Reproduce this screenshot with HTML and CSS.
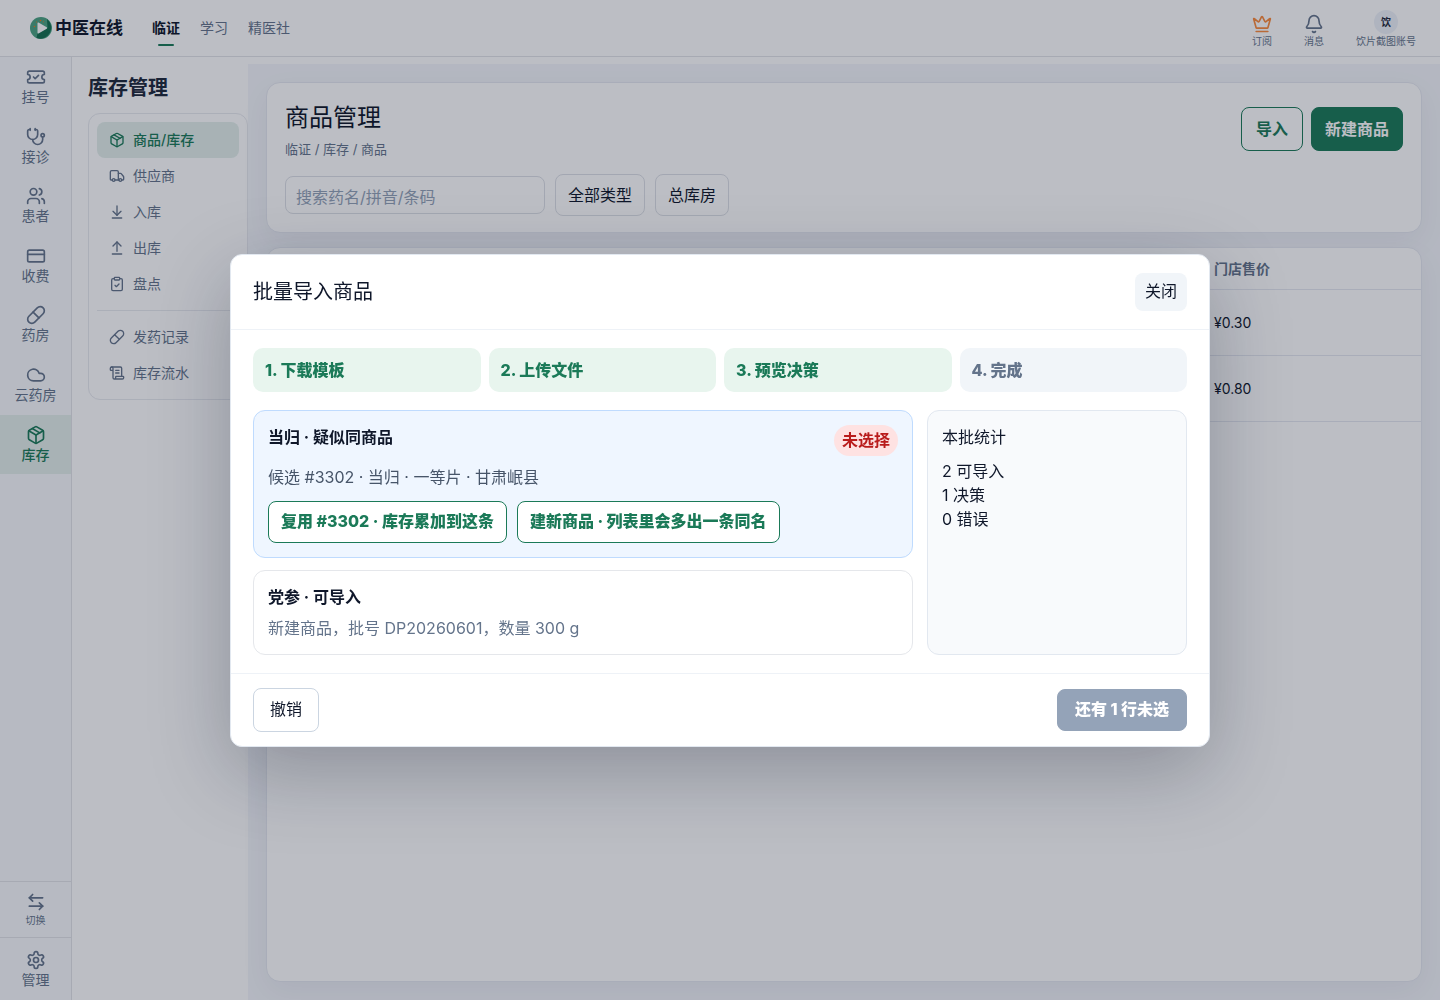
FILE: index.html
```html
<!DOCTYPE html>
<html lang="zh-CN">
<head>
    <meta charset="utf-8">
    <meta name="viewport" content="width=device-width, initial-scale=1">
    <title>商品管理</title>
    <link rel="stylesheet" href="styles.css">
</head>
<body>
    <!-- 图标 -->
    <svg class="sprite" aria-hidden="true">
        <symbol id="i-package" viewBox="0 0 24 24"><path d="M11 21.73a2 2 0 0 0 2 0l7-4A2 2 0 0 0 21 16V8a2 2 0 0 0-1-1.73l-7-4a2 2 0 0 0-2 0l-7 4A2 2 0 0 0 3 8v8a2 2 0 0 0 1 1.73z"/><path d="M12 22V12"/><path d="M3.29 7 12 12l8.71-5"/><path d="m7.5 4.27 9 5.15"/></symbol>
        <symbol id="i-pill" viewBox="0 0 24 24"><path d="m10.5 20.5 10-10a4.95 4.95 0 1 0-7-7l-10 10a4.95 4.95 0 1 0 7 7Z"/><path d="m8.5 8.5 7 7"/></symbol>
    </svg>

    <div class="app">
        <header class="topbar">
            <a class="brand" href="#">
                <svg class="logo" viewBox="0 0 22 22" aria-hidden="true">
                    <circle cx="11" cy="11" r="11" fill="#4ba382"/>
                    <path d="M17 2a11 11 0 0 1-10.500 19L7.500 16.500 17.500 11z" fill="#14704f"/>
                    <path d="M7.500 6.200q0-1.200 1-.6l8.200 4.700q1 .7 0 1.400l-8.200 4.700q-1 .6-1-.6z" fill="#fff"/>
                    <circle cx="4.500" cy="9.500" r=".8" fill="#f97316"/>
                    <circle cx="10.500" cy="3.500" r=".8" fill="#f97316"/>
                    <circle cx="13.500" cy="4.800" r=".5" fill="#f97316"/>
                    <circle cx="6.500" cy="5" r=".5" fill="#f97316"/>
                </svg>
                <span>中医在线</span>
            </a>
            <nav class="tabs">
                <a class="active" href="#">临证</a>
                <a href="#">学习</a>
                <a href="#">精医社</a>
            </nav>
            <div class="tools">
                <button type="button" class="tool">
                    <svg class="icon crown" viewBox="0 0 24 24"><path d="M11.562 3.266a.5.5 0 0 1 .876 0L15.390 8.870a1 1 0 0 0 1.516.294L21.183 5.500a.5.5 0 0 1 .798.519l-2.834 10.246a1 1 0 0 1-.956.734H5.810a1 1 0 0 1-.957-.734L2.020 6.020a.5.5 0 0 1 .798-.519l4.276 3.664a1 1 0 0 0 1.516-.294z"/><path d="M5 21h14"/></svg>
                    <span>订阅</span>
                </button>
                <button type="button" class="tool">
                    <svg class="icon" viewBox="0 0 24 24"><path d="M10.268 21a2 2 0 0 0 3.464 0"/><path d="M3.262 15.326A1 1 0 0 0 4 17h16a1 1 0 0 0 .74-1.673C19.410 13.956 18 12.499 18 8A6 6 0 0 0 6 8c0 4.499-1.411 5.956-2.738 7.326"/></svg>
                    <span>消息</span>
                </button>
                <button type="button" class="tool">
                    <span class="avatar">饮</span>
                    <span>饮片截图账号</span>
                </button>
            </div>
        </header>

        <div class="shell">
            <nav class="rail">
                <a href="#"><svg class="icon" viewBox="0 0 24 24"><path d="M2 9a3 3 0 1 1 0 6v2a2 2 0 0 0 2 2h16a2 2 0 0 0 2-2v-2a3 3 0 1 1 0-6V7a2 2 0 0 0-2-2H4a2 2 0 0 0-2 2Z"/><path d="m9 12 2 2 4-4"/></svg>挂号</a>
                <a href="#"><svg class="icon" viewBox="0 0 24 24"><path d="M11 2v2"/><path d="M5 2v2"/><path d="M5 3H4a2 2 0 0 0-2 2v4a6 6 0 0 0 12 0V5a2 2 0 0 0-2-2h-1"/><path d="M8 15a6 6 0 0 0 12 0v-3"/><circle cx="20" cy="10" r="2"/></svg>接诊</a>
                <a href="#"><svg class="icon" viewBox="0 0 24 24"><path d="M16 21v-2a4 4 0 0 0-4-4H6a4 4 0 0 0-4 4v2"/><circle cx="9" cy="7" r="4"/><path d="M22 21v-2a4 4 0 0 0-3-3.870"/><path d="M16 3.130a4 4 0 0 1 0 7.750"/></svg>患者</a>
                <a href="#"><svg class="icon" viewBox="0 0 24 24"><rect width="20" height="14" x="2" y="5" rx="2"/><path d="M2 10h20"/></svg>收费</a>
                <a href="#"><svg class="icon"><use href="#i-pill"/></svg>药房</a>
                <a href="#"><svg class="icon" viewBox="0 0 24 24"><path d="M17.500 19H9a7 7 0 1 1 6.710-9h1.790a4.500 4.500 0 1 1 0 9Z"/></svg>云药房</a>
                <a class="active" href="#"><svg class="icon"><use href="#i-package"/></svg>库存</a>
                <button type="button" class="switch"><svg class="icon" viewBox="0 0 24 24"><path d="M8 3 4 7l4 4"/><path d="M4 7h16"/><path d="m16 21 4-4-4-4"/><path d="M20 17H4"/></svg>切换</button>
                <a class="manage" href="#"><svg class="icon" viewBox="0 0 24 24"><path d="M12.220 2h-.44a2 2 0 0 0-2 2v.18a2 2 0 0 1-1 1.730l-.43.25a2 2 0 0 1-2 0l-.15-.08a2 2 0 0 0-2.730.73l-.22.38a2 2 0 0 0 .73 2.730l.15.1a2 2 0 0 1 1 1.720v.51a2 2 0 0 1-1 1.740l-.15.09a2 2 0 0 0-.73 2.730l.22.38a2 2 0 0 0 2.730.73l.15-.08a2 2 0 0 1 2 0l.43.25a2 2 0 0 1 1 1.730V20a2 2 0 0 0 2 2h.44a2 2 0 0 0 2-2v-.18a2 2 0 0 1 1-1.730l.43-.25a2 2 0 0 1 2 0l.15.08a2 2 0 0 0 2.730-.73l.22-.39a2 2 0 0 0-.73-2.730l-.15-.08a2 2 0 0 1-1-1.740v-.5a2 2 0 0 1 1-1.740l.15-.09a2 2 0 0 0 .73-2.730l-.22-.38a2 2 0 0 0-2.730-.73l-.15.08a2 2 0 0 1-2 0l-.43-.25a2 2 0 0 1-1-1.730V4a2 2 0 0 0-2-2z"/><circle cx="12" cy="12" r="3"/></svg>管理</a>
            </nav>

            <aside class="subnav">
                <h2>库存管理</h2>
                <nav class="menu">
                    <a class="active" href="#"><svg class="icon"><use href="#i-package"/></svg>商品/库存</a>
                    <a href="#"><svg class="icon" viewBox="0 0 24 24"><path d="M14 18V6a2 2 0 0 0-2-2H4a2 2 0 0 0-2 2v11a1 1 0 0 0 1 1h2"/><path d="M15 18H9"/><path d="M19 18h2a1 1 0 0 0 1-1v-3.650a1 1 0 0 0-.22-.624l-3.480-4.350A1 1 0 0 0 17.520 8H14"/><circle cx="17" cy="18" r="2"/><circle cx="7" cy="18" r="2"/></svg>供应商</a>
                    <a href="#"><svg class="icon" viewBox="0 0 24 24"><path d="M12 17V3"/><path d="m6 11 6 6 6-6"/><path d="M19 21H5"/></svg>入库</a>
                    <a href="#"><svg class="icon" viewBox="0 0 24 24"><path d="m18 9-6-6-6 6"/><path d="M12 3v14"/><path d="M5 21h14"/></svg>出库</a>
                    <a href="#"><svg class="icon" viewBox="0 0 24 24"><rect width="8" height="4" x="8" y="2" rx="1"/><path d="M16 4h2a2 2 0 0 1 2 2v14a2 2 0 0 1-2 2H6a2 2 0 0 1-2-2V6a2 2 0 0 1 2-2h2"/><path d="m9 14 2 2 4-4"/></svg>盘点</a>
                    <hr>
                    <a href="#"><svg class="icon"><use href="#i-pill"/></svg>发药记录</a>
                    <a href="#"><svg class="icon" viewBox="0 0 24 24"><path d="M15 12h-5"/><path d="M15 8h-5"/><path d="M19 17V5a2 2 0 0 0-2-2H4"/><path d="M8 21h12a2 2 0 0 0 2-2v-1a1 1 0 0 0-1-1H11a1 1 0 0 0-1 1v1a2 2 0 1 1-4 0V5a2 2 0 1 0-4 0v2a1 1 0 0 0 1 1h3"/></svg>库存流水</a>
                </nav>
            </aside>

            <main class="main">
                <section class="card head">
                    <div class="head-row">
                        <div>
                            <h1>商品管理</h1>
                            <p class="crumb">临证 / 库存 / 商品</p>
                        </div>
                        <div class="actions">
                            <button type="button" class="btn outline">导入</button>
                            <button type="button" class="btn primary">新建商品</button>
                        </div>
                    </div>
                    <div class="filters">
                        <input type="text" aria-label="搜索药名/拼音/条码" placeholder="搜索药名/拼音/条码">
                        <button type="button" class="btn">全部类型</button>
                        <button type="button" class="btn">总库房</button>
                    </div>
                </section>

                <section class="card list">
                    <table>
                        <thead>
                            <tr><td></td><th scope="col">门店售价</th></tr>
                        </thead>
                        <tbody>
                            <tr><td></td><td>¥0.30</td></tr>
                            <tr><td></td><td>¥0.80</td></tr>
                        </tbody>
                    </table>
                </section>
            </main>
        </div>
    </div>

    <!-- 批量导入弹窗 -->
    <div class="overlay">
        <div class="modal" role="dialog" aria-modal="true" aria-labelledby="modal-title">
            <header class="modal-head">
                <h2 id="modal-title">批量导入商品</h2>
                <button type="button" class="close">关闭</button>
            </header>
            <div class="modal-body">
                <ol class="steps">
                    <li class="done">1. 下载模板</li>
                    <li class="done">2. 上传文件</li>
                    <li class="done">3. 预览决策</li>
                    <li>4. 完成</li>
                </ol>
                <div class="preview">
                    <div class="rows">
                        <article class="row pending">
                            <div class="row-head">
                                <h3>当归 · 疑似同商品</h3>
                                <span class="badge">未选择</span>
                            </div>
                            <p class="candidate">候选 #3302 · 当归 · 一等片 · 甘肃岷县</p>
                            <div class="choices">
                                <button type="button" class="btn outline">复用 #3302 · 库存累加到这条</button>
                                <button type="button" class="btn outline">建新商品 · 列表里会多出一条同名</button>
                            </div>
                        </article>
                        <article class="row">
                            <h3>党参 · 可导入</h3>
                            <p>新建商品，批号 DP20260601，数量 300 g</p>
                        </article>
                    </div>
                    <aside class="summary">
                        <h3>本批统计</h3>
                        <p>2 可导入</p>
                        <p>1 决策</p>
                        <p>0 错误</p>
                    </aside>
                </div>
            </div>
            <footer class="modal-foot">
                <button type="button" class="btn undo">撤销</button>
                <button type="button" class="btn submit" disabled>还有 1 行未选</button>
            </footer>
        </div>
    </div>
</body>
</html>
```
FILE: styles.css
```css
* {margin: 0; padding: 0; box-sizing: border-box;}
body {font: 16px/23px Inter, "Noto Sans CJK SC", sans-serif; color: #0f172a; background: #fff;}
a {color: inherit; text-decoration: none;}
button, input {font: inherit; color: inherit;}
button {border: 0; background: none; cursor: pointer;}
h1, h2, h3 {font-weight: 400;}
.sprite {position: absolute; width: 0; height: 0;}
.icon {display: block; flex: none; width: 20px; height: 20px; fill: none; stroke: currentColor; stroke-width: 2; stroke-linecap: round; stroke-linejoin: round;}

.app {display: flex; flex-direction: column; height: calc(100vh - 1px); min-height: 760px;}

/* 顶栏 */
.topbar {display: flex; align-items: center; height: 57px; padding: 0 24px 0 30px; border-bottom: 1px solid #e2e4e8;}
.brand {display: flex; align-items: center; gap: 3px; font-size: 17px; font-weight: 700;}
.logo {width: 22px; height: 22px;}
.tabs {display: flex; gap: 20px; margin-left: 29px; font-size: 14px; line-height: 20px; color: #64748b;}
.tabs a {position: relative; padding-bottom: 1px;}
.tabs .active {font-weight: 700; color: #0f172a;}
.tabs .active::after {content: ""; position: absolute; left: 50%; bottom: -7px; width: 16px; height: 2px; margin-left: -8px; border-radius: 1px; background: #1b7a58;}
.tools {display: flex; align-items: flex-end; gap: 32px; margin-left: auto; padding-top: 2px;}
.tool {display: flex; flex-direction: column; align-items: center; font-size: 10px; line-height: 14px; color: #64748b;}
.crown {color: #fb8b3c;}
.avatar {width: 24px; height: 24px; border-radius: 50%; background: #eef2f9; color: #1e293b; font-weight: 600; line-height: 24px; text-align: center;}

.shell {display: flex; flex: 1; min-height: 0;}

/* 左侧主导航 */
.rail {display: flex; flex-direction: column; width: 72px; border-right: 1px solid #e2e4e8; background: #f8fafc; font-size: 14px; line-height: 1.4; color: #64748b;}
.rail a, .rail button {display: flex; flex-direction: column; align-items: center; padding: 10px 0;}
.rail .active {background: #e3efeb; color: #1b7a58; font-weight: 500;}
.rail .switch {gap: 1px; margin-top: auto; border-top: 1px solid #e2e4e8; border-bottom: 1px solid #e2e4e8; font-size: 10px; line-height: 14px;}
.rail .manage {padding-top: 12px;}

/* 二级导航 */
.subnav {width: 176px; padding: 18px 0 0 16px;}
.subnav h2 {font-size: 20px; line-height: 26px; font-weight: 700; color: #1e293b;}
.menu {margin-top: 12px; padding: 8px; border: 1px solid #e8eaef; border-radius: 12px; font-size: 14px; line-height: 20px; color: #64748b;}
.menu a {display: flex; align-items: center; gap: 8px; height: 36px; padding: 0 12px; border-radius: 8px;}
.menu .icon {width: 16px; height: 16px;}
.menu .active {background: #e3efeb; color: #1b7a58; font-weight: 500;}
.menu hr {height: 1px; margin: 8px 0; border: 0; background: #e8eaef;}

/* 内容区 */
.main {display: flex; flex: 1; flex-direction: column; gap: 14px; min-width: 0; margin-top: 7px; padding: 18px; background: #f4f6fb;}
.card {border: 1px solid #e5e8f0; border-radius: 14px; background: #fff; box-shadow: 0 10px 30px rgba(15, 23, 42, .05);}
.head {padding: 18px 18px 16px;}
.head-row {display: flex; align-items: flex-start; justify-content: space-between;}
.head h1 {font-size: 24px; line-height: 34px;}
.crumb {margin-top: 5px; font-size: 13px; line-height: 18px; color: #64748b;}
.actions {display: flex; gap: 8px; padding-top: 6px;}
.actions .btn {height: 44px; padding: 0 13px; font-weight: 700;}
.btn {height: 42px; padding: 0 12px; border: 1px solid #dde0e6; border-radius: 8px; background: #fff;}
.outline {border-color: #1b7a58; color: #1b7a58; font-weight: 800;}
.actions .outline {padding: 0 14px;}
.primary {border-color: #1b7a58; background: #1b7a58; color: #fff;}
.filters {display: flex; flex-wrap: wrap; align-items: center; gap: 10px; margin-top: 16px;}
.filters input {width: 260px; height: 38px; padding: 4px 10px 0; border: 1px solid #dde0e6; border-radius: 8px; background: transparent;}
.filters input::placeholder {color: #94a3b8;}
.list {flex: 1; overflow: hidden;}
.list table {width: 100%; border-collapse: collapse; table-layout: fixed; font-size: 14px; line-height: 20px;}
.list th, .list td {height: 66px; padding: 2px 12px 0; border-bottom: 1px solid #e5e8f0; text-align: left;}
.list thead th, .list thead td {height: 41px;}
.list th {color: #64748b; font-weight: 600;}
.list tr > :last-child {width: 219px;}

/* 弹窗 */
.overlay {position: fixed; inset: 0 0 1px; display: flex; align-items: center; justify-content: center; padding: 16px; background: rgba(15, 23, 42, .28);}
.modal {width: 100%; max-width: 980px; border: 1px solid #e2e8f0; border-radius: 12px; background: #fff; box-shadow: 0 24px 80px rgba(15, 23, 42, .28);}
.modal-head {display: flex; align-items: center; justify-content: space-between; padding: 18px 22px; border-bottom: 1px solid #eef2f7;}
.modal-head h2 {font-size: 20px; line-height: 30px;}
.close {height: 38px; padding: 0 10px; border-radius: 8px; background: #f1f5f9;}
.modal-body {display: grid; gap: 18px; padding: 18px 22px;}
.steps {display: grid; grid-template-columns: repeat(4, 1fr); gap: 8px; list-style: none;}
.steps li {height: 44px; padding: 0 12px; border-radius: 10px; background: #f1f5f9; color: #64748b; font-weight: 800; line-height: 44px;}
.steps .done {background: #e8f5ee; color: #1b7a58;}
.preview {display: grid; grid-template-columns: 1fr 260px; gap: 14px;}
.rows {display: grid; gap: 12px;}
.row {padding: 14px; border: 1px solid #e5e7eb; border-radius: 12px; background: #fff;}
.row h3 {font-size: 16px; line-height: 24px; font-weight: 700;}
.row p {margin-top: 8px; color: #64748b;}
.pending {border-color: #bfdbfe; background: #eff6ff;}
.row-head {display: flex; align-items: flex-start; justify-content: space-between;}
.badge {padding: 4px 8px; border-radius: 16px; background: #fee2e2; color: #b91c1c; font-weight: 700;}
.row .candidate {margin-top: 10px; color: #475569;}
.choices {display: flex; flex-wrap: wrap; gap: 10px; margin-top: 12px;}
.summary {padding: 14px; border: 1px solid #e2e8f0; border-radius: 12px; background: #f8fafc; line-height: 24px;}
.summary h3 {margin-bottom: 10px; font-size: 16px;}
.modal-foot {display: flex; align-items: center; justify-content: space-between; padding: 14px 22px; border-top: 1px solid #eef2f7;}
.undo {height: 44px; padding: 0 16px; border-color: #cbd5e1;}
.submit {padding: 0 17px; border-color: #94a3b8; background: #94a3b8; color: #fff; font-weight: 800;}
```
